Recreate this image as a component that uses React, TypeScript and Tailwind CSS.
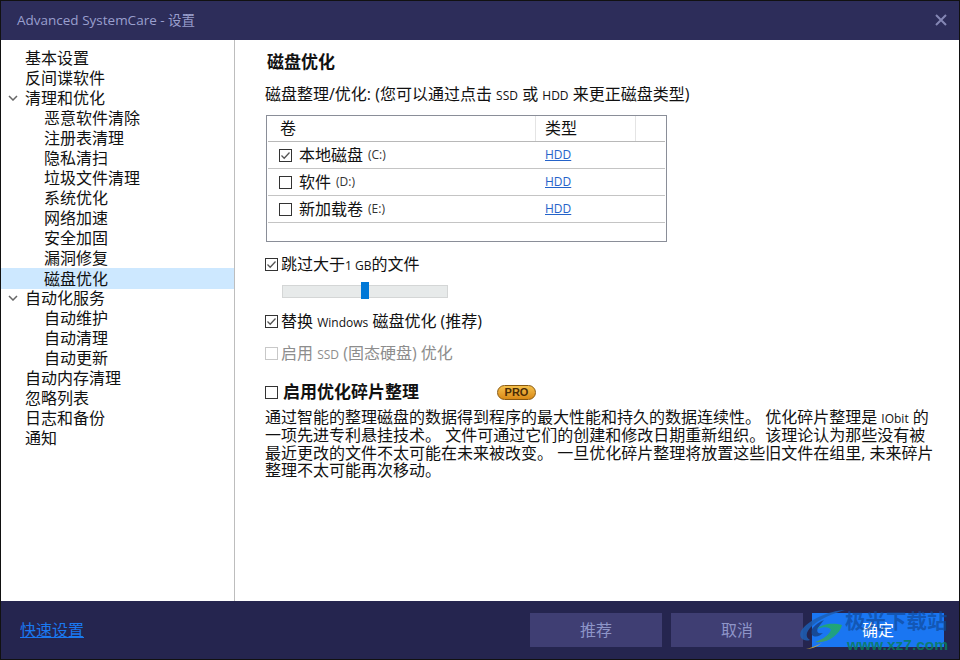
import React from "react";

const cjk = "font-['Open_Sans','Noto_Sans_CJK_SC',sans-serif]";

const tree: { label: string; level: number; open?: boolean; selected?: boolean }[] = [
  { label: "基本设置", level: 0 },
  { label: "反间谍软件", level: 0 },
  { label: "清理和优化", level: 0, open: true },
  { label: "恶意软件清除", level: 1 },
  { label: "注册表清理", level: 1 },
  { label: "隐私清扫", level: 1 },
  { label: "垃圾文件清理", level: 1 },
  { label: "系统优化", level: 1 },
  { label: "网络加速", level: 1 },
  { label: "安全加固", level: 1 },
  { label: "漏洞修复", level: 1 },
  { label: "磁盘优化", level: 1, selected: true },
  { label: "自动化服务", level: 0, open: true },
  { label: "自动维护", level: 1 },
  { label: "自动清理", level: 1 },
  { label: "自动更新", level: 1 },
  { label: "自动内存清理", level: 0 },
  { label: "忽略列表", level: 0 },
  { label: "日志和备份", level: 0 },
  { label: "通知", level: 0 },
];

function Check({ checked, disabled }: { checked?: boolean; disabled?: boolean }) {
  const stroke = disabled ? "#c8c8c8" : "#333333";
  return (
    <svg width={13} height={13} viewBox="0 0 13 13" className="shrink-0">
      <rect x="0.5" y="0.5" width="12" height="12" fill="#fff" stroke={stroke} />
      {checked && <path d="M2.5 6.5 L5.2 9.2 L10.5 3.5" fill="none" stroke="#555" strokeWidth="1.3" />}
    </svg>
  );
}

function Row({ label, drive, checked }: { label: string; drive: string; checked?: boolean }) {
  return (
    <div className="flex h-[27px] items-center border-b border-[#c4c4c4]">
      <div className="flex w-[268px] items-center pl-[11px]">
        <Check checked={checked} />
        <span className="ml-[7px] text-[16px] text-[#111]">{label}</span>
        <span className="ml-[5px] text-[12px] text-[#333]">{drive}</span>
      </div>
      <a className="ml-[9px] text-[12px] text-[#2563c9] underline">HDD</a>
    </div>
  );
}

function Watermark() {
  return (
    <div className="pointer-events-none absolute bottom-[3px] right-[10px] flex items-center">
      <svg width="60" height="50" viewBox="0 0 60 50" className="mr-[-13px]">
        <defs>
          <linearGradient id="leaf" x1="0" y1="1" x2="1" y2="0">
            <stop offset="0" stopColor="#4f9a5a" />
            <stop offset="0.5" stopColor="#1f9f86" />
            <stop offset="1" stopColor="#23a86b" />
          </linearGradient>
        </defs>
        <path d="M47 4 C30 5 10 14 3 25 C0 32 6 36 12 34 C7 31 8 26 13 21 C21 13 34 8 47 4 Z" fill="#1d5fb4" opacity="0.85" />
        <path d="M26 14 C17 18 11 24 14 29 C17 32 22 30 25 27 C20 28 18 26 20 22 C22 19 24 16 26 14 Z" fill="#16407f" opacity="0.8" />
        <path d="M17 36 C30 38 42 28 44 19 C36 17 25 17 19 23 C26 20 32 21 33 24 C30 31 22 34 17 36 Z" fill="url(#leaf)" />
        <path d="M8 43 C13 42 18 40 24 37 C20 40 14 43 8 43 Z" fill="#c9a93a" />
      </svg>
      <div className="flex w-[104px] flex-col">
        <span className="text-[20.5px] font-bold leading-[24px] text-[#104a9a]/70">极光下载站</span>
        <span className="mt-[3px] pl-[2px] font-['Liberation_Sans',sans-serif] text-[15.5px] font-bold leading-[18px] text-[#0a7d5c]/85">www.xz7.com</span>
      </div>
    </div>
  );
}

export default function App() {
  return (
    <div className={`relative flex h-[660px] w-[960px] flex-col overflow-hidden border border-[#111] bg-white ${cjk}`}>
      <div className="flex h-[39px] shrink-0 items-center justify-between bg-[#2d2d5a] pl-[16px] pr-[12px]">
        <span className="text-[13.5px] text-[#9a9fce]">Advanced SystemCare - 设置</span>
        <svg width="12" height="12" viewBox="0 0 12 12" className="mb-[1px]">
          <path d="M1 1 L11 11 M11 1 L1 11" stroke="#8486b4" strokeWidth="2" />
        </svg>
      </div>

      <div className="flex min-h-0 flex-1">
        <div className="w-[234px] shrink-0 border-r border-[#bdbdbd] pt-[8px]">
          {tree.map((t) => (
            <div
              key={t.label}
              className={`relative flex items-center text-[16px] leading-[20px] text-[#111] ${t.level === 1 ? "pl-[43px]" : "pl-[24px]"} ${t.selected ? "mb-[-1px] h-[21px] bg-[#cde8ff]" : "h-[20px]"}`}
            >
              {t.open && (
                <svg width="10" height="6" viewBox="0 0 10 6" className="absolute left-[7px] top-[7px]">
                  <path d="M1 1 L5 5 L9 1" fill="none" stroke="#666" strokeWidth="1.5" />
                </svg>
              )}
              {t.label}
            </div>
          ))}
        </div>

        <div className="min-w-0 flex-1 pl-[30px] pr-[20px]">
          <div className="mt-[11px] pl-[2px] text-[17px] font-bold leading-[22px] text-[#111]">磁盘优化</div>
          <div className="mt-[10px] h-[22px] whitespace-nowrap text-[16px] leading-[22px] text-[#111]">
            磁盘整理/优化: (您可以通过点击 <span className="text-[12px]">SSD</span> 或 <span className="text-[12px]">HDD</span> 来更正磁盘类型)
          </div>

          <div className="ml-[1px] mt-[10px] h-[127px] w-[401px] border border-[#8a8e98] px-[1px]">
            <div className="flex h-[26px] border-b border-[#b8b8b8] text-[16px] text-[#111]">
              <div className="w-[268px] border-r border-[#e4e4e4] pl-[12px] leading-[24px]">卷</div>
              <div className="w-[100px] border-r border-[#e4e4e4] pl-[9px] leading-[24px]">类型</div>
            </div>
            <Row label="本地磁盘" drive="(C:)" checked />
            <Row label="软件" drive="(D:)" />
            <Row label="新加载卷" drive="(E:)" />
          </div>

          <div className="mt-[11px] flex h-[22px] items-center text-[16px] text-[#111]">
            <Check checked />
            <span className="ml-[3px]">跳过大于<span className="text-[12px]">1 GB</span>的文件</span>
          </div>
          <div className="relative ml-[17px] mt-[10px] h-[13px] w-[166px] border border-[#d4d6d6] bg-[#e7eaea]">
            <div className="absolute left-[78px] top-[-4px] h-[17px] w-[8px] bg-[#0078d7]" />
          </div>
          <div className="mt-[12px] flex h-[22px] items-center text-[16px] text-[#111]">
            <Check checked />
            <span className="ml-[3px]">替换 <span className="text-[12px]">Windows</span> 磁盘优化 (推荐)</span>
          </div>
          <div className="mt-[10px] flex h-[22px] items-center text-[16px] text-[#8d8d8d]">
            <Check disabled />
            <span className="ml-[3px]">启用 <span className="text-[12px]">SSD</span> (固态硬盘) 优化</span>
          </div>

          <div className="mt-[17px] flex h-[22px] items-center">
            <Check />
            <span className="ml-[5px] text-[17px] font-bold text-[#111]">启用优化碎片整理</span>
            <span className="ml-[78px] flex h-[15px] w-[39px] items-center justify-center rounded-full border border-[#8a5a10] bg-gradient-to-b from-[#f5c04a] to-[#d98a14] font-['Liberation_Sans',sans-serif] text-[11px] font-bold text-[#4a2c05]">
              PRO
            </span>
          </div>
          <p className="mt-[6px] whitespace-nowrap text-[16px] leading-[17.3px] text-[#111]">
            通过智能的整理磁盘的数据得到程序的最大性能和持久的数据连续性。 优化碎片整理是 <span className="text-[12px]">IObit</span> 的
            <br />
            一项先进专利悬挂技术。 文件可通过它们的创建和修改日期重新组织。该理论认为那些没有被
            <br />
            最近更改的文件不太可能在未来被改变。 一旦优化碎片整理将放置这些旧文件在组里, 未来碎片
            <br />
            整理不太可能再次移动。
          </p>
        </div>
      </div>

      <div className="flex h-[58px] shrink-0 items-center bg-[#25254f] pl-[19px] pr-[15px]">
        <a className="text-[16px] text-[#1a78f0] underline">快速设置</a>
        <div className="ml-auto flex gap-[9px]">
          <button className="h-[34px] w-[132px] bg-[#3f3e73] text-[16px] text-[#8e95c8]">推荐</button>
          <button className="h-[34px] w-[132px] bg-[#3f3e73] text-[16px] text-[#8e95c8]">取消</button>
          <button className="h-[34px] w-[132px] bg-[#1a76f2] text-[16px] text-white">确定</button>
        </div>
      </div>

      <Watermark />
    </div>
  );
}
